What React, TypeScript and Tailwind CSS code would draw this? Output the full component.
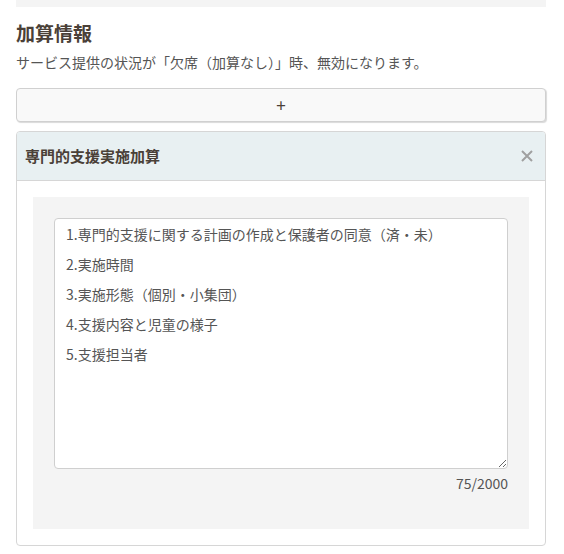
import React from "react";

const NOTE = `1.専門的支援に関する計画の作成と保護者の同意（済・未）
2.実施時間
3.実施形態（個別・小集団）
4.支援内容と児童の様子
5.支援担当者`;

const App = () => {
  return (
    <div
      className="w-[564px] h-[554px] bg-white text-[#555] overflow-hidden"
      style={{ fontFamily: '"Noto Sans CJK JP", "Noto Sans", sans-serif' }}
    >
      <div className="ml-4 mr-[18px]">
        <div className="h-[7px] bg-[#f4f4f4]" />
        <h2 className="mt-[14px] text-[19px] leading-[24px] font-bold text-[#4a4038]">加算情報</h2>
        <p className="mt-[7px] text-[14px] leading-[20px] text-[#555]">
          サービス提供の状況が「欠席（加算なし）」時、無効になります。
        </p>
        <button className="mt-[16px] w-full h-[34px] bg-[#f9f9f9] border border-[#d0d0d0] rounded-[4px] shadow-[1px_1px_1px_rgba(0,0,0,0.15)] text-[17px] text-[#4a4038] flex items-center justify-center">
          +
        </button>
        <div className="mt-[9px] border border-[#d6d6d6] rounded-[4px] overflow-hidden">
          <div className="h-[49px] bg-[#e8f0f2] border-b border-[#d6d6d6] flex items-center justify-between pl-[8px] pr-[12px]">
            <span className="text-[15px] font-bold text-[#4a4038]">専門的支援実施加算</span>
            <svg width="12" height="12" viewBox="0 0 12 12" className="text-[#a0a0a0]">
              <path d="M1 1L11 11M11 1L1 11" stroke="currentColor" strokeWidth="2" />
            </svg>
          </div>
          <div className="px-4 pt-4 pb-[16px]">
            <div className="bg-[#f4f4f4] px-[21px] pt-[21px] pb-[34px]">
              <textarea
                readOnly
                value={NOTE}
                className="block w-full h-[251px] bg-white border border-[#cfcfcf] rounded-[4px] px-[11px] pt-0 pb-[2px] text-[14px] leading-[30px] text-[#555] resize-y outline-none"
              />
              <div className="mt-[4px] mb-[2px] text-right text-[14px] leading-[20px] text-[#555]">75/2000</div>
            </div>
          </div>
        </div>
      </div>
    </div>
  );
};

export default App;
